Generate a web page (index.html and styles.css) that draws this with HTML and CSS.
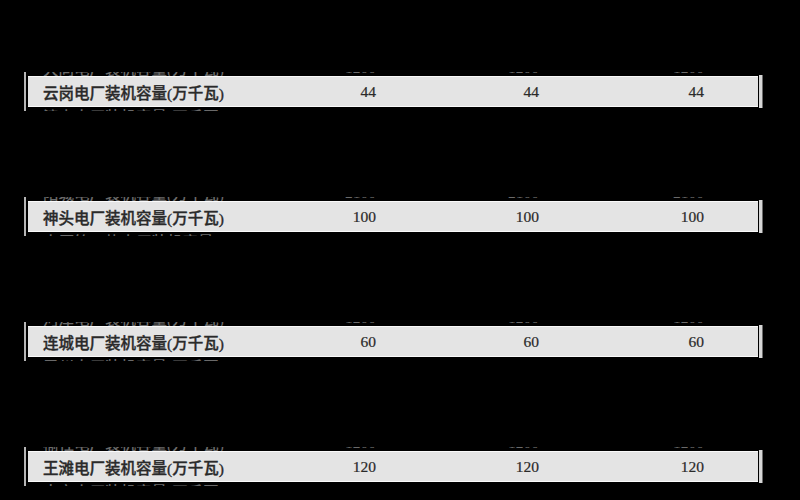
FILE: index.html
```html
<!DOCTYPE html>
<html lang="zh">
<head>
<meta charset="utf-8">
<link rel="stylesheet" href="styles.css">
</head>
<body>
<main class="page">
  <section class="block">
    <div class="rule"></div>
    <div class="strip">
      <div class="frag frag-top"><div class="row"><span class="label">大同电厂装机容量(万千瓦)</span><span class="num">1200</span><span class="num">1200</span><span class="num">1200</span></div></div>
      <div class="row box"><span class="label">云岗电厂装机容量(万千瓦)</span><span class="num">44</span><span class="num">44</span><span class="num">44</span></div>
      <div class="frag frag-bottom"><div class="row"><span class="label">漳山电厂装机容量(万千瓦)</span><span class="num">1800</span><span class="num">1800</span><span class="num">1800</span></div></div>
    </div>
    <div class="bar"></div>
  </section>
  <section class="block">
    <div class="rule"></div>
    <div class="strip">
      <div class="frag frag-top"><div class="row"><span class="label">阳城电厂装机容量(万千瓦)</span><span class="num">2100</span><span class="num">2100</span><span class="num">2100</span></div></div>
      <div class="row box"><span class="label">神头电厂装机容量(万千瓦)</span><span class="num">100</span><span class="num">100</span><span class="num">100</span></div>
      <div class="frag frag-bottom"><div class="row"><span class="label">太原第一热电厂装机容量</span><span class="num">1380</span><span class="num">1380</span><span class="num">1380</span></div></div>
    </div>
    <div class="bar"></div>
  </section>
  <section class="block">
    <div class="rule"></div>
    <div class="strip">
      <div class="frag frag-top"><div class="row"><span class="label">河津电厂装机容量(万千瓦)</span><span class="num">1200</span><span class="num">1200</span><span class="num">1200</span></div></div>
      <div class="row box"><span class="label">连城电厂装机容量(万千瓦)</span><span class="num">60</span><span class="num">60</span><span class="num">60</span></div>
      <div class="frag frag-bottom"><div class="row"><span class="label">霍州电厂装机容量(万千瓦)</span><span class="num">1200</span><span class="num">1200</span><span class="num">1200</span></div></div>
    </div>
    <div class="bar"></div>
  </section>
  <section class="block">
    <div class="rule"></div>
    <div class="strip">
      <div class="frag frag-top"><div class="row"><span class="label">榆社电厂装机容量(万千瓦)</span><span class="num">1200</span><span class="num">1200</span><span class="num">1200</span></div></div>
      <div class="row box"><span class="label">王滩电厂装机容量(万千瓦)</span><span class="num">120</span><span class="num">120</span><span class="num">120</span></div>
      <div class="frag frag-bottom"><div class="row"><span class="label">古交电厂装机容量(万千瓦)</span><span class="num">1600</span><span class="num">1600</span><span class="num">1600</span></div></div>
    </div>
    <div class="bar"></div>
  </section>
</main>
</body>
</html>
```
FILE: styles.css
```css
html, body {
  margin: 0;
  padding: 0;
  background: #000;
}
body {
  width: 800px;
  height: 500px;
  overflow: hidden;
  font-family: "Liberation Serif", "Noto Sans CJK SC", serif;
}
.page {
  display: flex;
  flex-direction: column;
  gap: 86px;
  padding-top: 72px;
  padding-left: 24px;
}
.block {
  display: flex;
  align-items: stretch;
}
.rule {
  width: 2px;
  background: #b5b5b5;
  margin-right: 2px;
}
.strip {
  width: 730px;
  display: flex;
  flex-direction: column;
}
.bar {
  width: 3px;
  margin: 3px 0 3px 1px;
  background: #d6d6d6;
  border-right: 1px solid #6a6a6a;
}
.row {
  height: 31px;
  display: flex;
  align-items: center;
  font-size: 15.5px;
  color: #2a2a2a;
}
.box {
  box-sizing: border-box;
  background: #e4e4e4;
  border-top: 1px solid #fafafa;
  border-bottom: 1px solid #fafafa;
}
.label {
  width: 160px;
  padding-left: 15px;
  white-space: nowrap;
  font-weight: 500;
  -webkit-text-stroke: 0.35px #2a2a2a;
}
.num {
  text-align: right;
  -webkit-text-stroke: 0.2px #2a2a2a;
}
.num:nth-child(2) { width: 173px; }
.num:nth-child(3) { width: 163px; }
.num:nth-child(4) { width: 165px; }
.frag {
  height: 4px;
  overflow: hidden;
  display: flex;
  flex-direction: column;
}
.frag .row {
  flex: none;
  color: #6a6a6a;
}
.frag .label,
.frag .num {
  -webkit-text-stroke: 0;
}
.frag-top {
  justify-content: flex-end;
}
.frag-top .row {
  margin-bottom: -7px;
}
.frag-bottom .row {
  margin-top: -7px;
}
```
